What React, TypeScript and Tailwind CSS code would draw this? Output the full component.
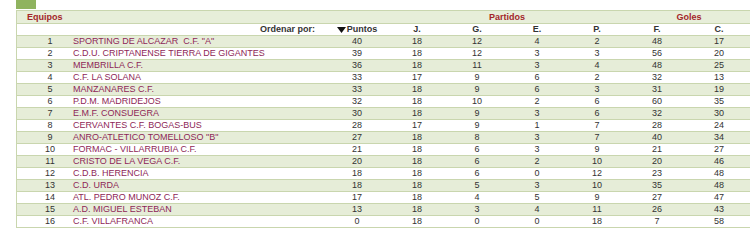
import React from "react";

type Row = [number, string, number, number, number, number, number, number, number];

const rows: Row[] = [
  [1, 'SPORTING DE ALCAZAR\u00a0 C.F. "A"', 40, 18, 12, 4, 2, 48, 17],
  [2, "C.D.U. CRIPTANENSE TIERRA DE GIGANTES", 39, 18, 12, 3, 3, 56, 20],
  [3, "MEMBRILLA C.F.", 36, 18, 11, 3, 4, 48, 25],
  [4, "C.F. LA SOLANA", 33, 17, 9, 6, 2, 32, 13],
  [5, "MANZANARES C.F.", 33, 18, 9, 6, 3, 31, 19],
  [6, "P.D.M. MADRIDEJOS", 32, 18, 10, 2, 6, 60, 35],
  [7, "E.M.F. CONSUEGRA", 30, 18, 9, 3, 6, 32, 30],
  [8, "CERVANTES C.F. BOGAS-BUS", 28, 17, 9, 1, 7, 28, 24],
  [9, 'ANRO-ATLETICO TOMELLOSO "B"', 27, 18, 8, 3, 7, 40, 34],
  [10, "FORMAC - VILLARRUBIA C.F.", 21, 18, 6, 3, 9, 21, 27],
  [11, "CRISTO DE LA VEGA C.F.", 20, 18, 6, 2, 10, 20, 46],
  [12, "C.D.B. HERENCIA", 18, 18, 6, 0, 12, 23, 48],
  [13, "C.D. URDA", 18, 18, 5, 3, 10, 35, 48],
  [14, "ATL. PEDRO MUNOZ C.F.", 17, 18, 4, 5, 9, 27, 47],
  [15, "A.D. MIGUEL ESTEBAN", 13, 18, 3, 4, 11, 26, 43],
  [16, "C.F. VILLAFRANCA", 0, 18, 0, 0, 18, 7, 58],
];

const grid =
  "grid grid-cols-[56px_254px_60px_60px_60px_60px_60px_60px_64px]";

export default function App() {
  return (
    <div
      className="w-[750px] h-[249px] bg-white overflow-hidden text-[9px] text-[#333333]"
      style={{ fontFamily: '"Liberation Sans", Arial, sans-serif' }}
    >
      <div className="pl-[16px]">
        <div className="w-[20px] h-[9px] bg-[#8fb35f]" />
        <div className="mt-[1px] border-l border-[#c9d6ae]">
          {/* header row 1 */}
          <div
            className={`${grid} h-[14px] items-center border-t border-b border-[#c9d6ae] bg-[#e7eed9] font-bold text-[#a3262a] leading-[12px]`}
          >
            <div className="col-span-3 pl-[10px]">Equipos</div>
            <div className="col-span-4 text-center">Partidos</div>
            <div className="col-span-2 text-center">Goles</div>
          </div>
          {/* header row 2 */}
          <div
            className={`${grid} h-[12px] items-center border-b border-[#c9d6ae] bg-white font-bold text-[#333333] leading-[11px]`}
          >
            <div />
            <div className="text-right pr-[12px]">Ordenar por:</div>
            <div className="flex items-center justify-center">
              <svg width="9" height="6" viewBox="0 0 9 6" className="mr-[1px]">
                <polygon points="0,0 9,0 4.5,6" fill="#111111" />
              </svg>
              <span>Puntos</span>
            </div>
            <div className="text-center">J.</div>
            <div className="text-center">G.</div>
            <div className="text-center">E.</div>
            <div className="text-center">P.</div>
            <div className="text-center">F.</div>
            <div className="text-center">C.</div>
          </div>
          {rows.map((r, i) => (
            <div
              key={r[0]}
              className={`${grid} h-[12px] items-center border-b border-[#c9d6ae] leading-[11px] ${
                i % 2 === 0 ? "bg-[#e6edd8]" : "bg-white"
              }`}
            >
              <div className="pl-[10px] text-center">{r[0]}</div>
              <div className="text-[#8e2757] whitespace-nowrap">{r[1]}</div>
              {r.slice(2).map((v, j) => (
                <div key={j} className="text-center">
                  {v}
                </div>
              ))}
            </div>
          ))}
        </div>
      </div>
    </div>
  );
}
